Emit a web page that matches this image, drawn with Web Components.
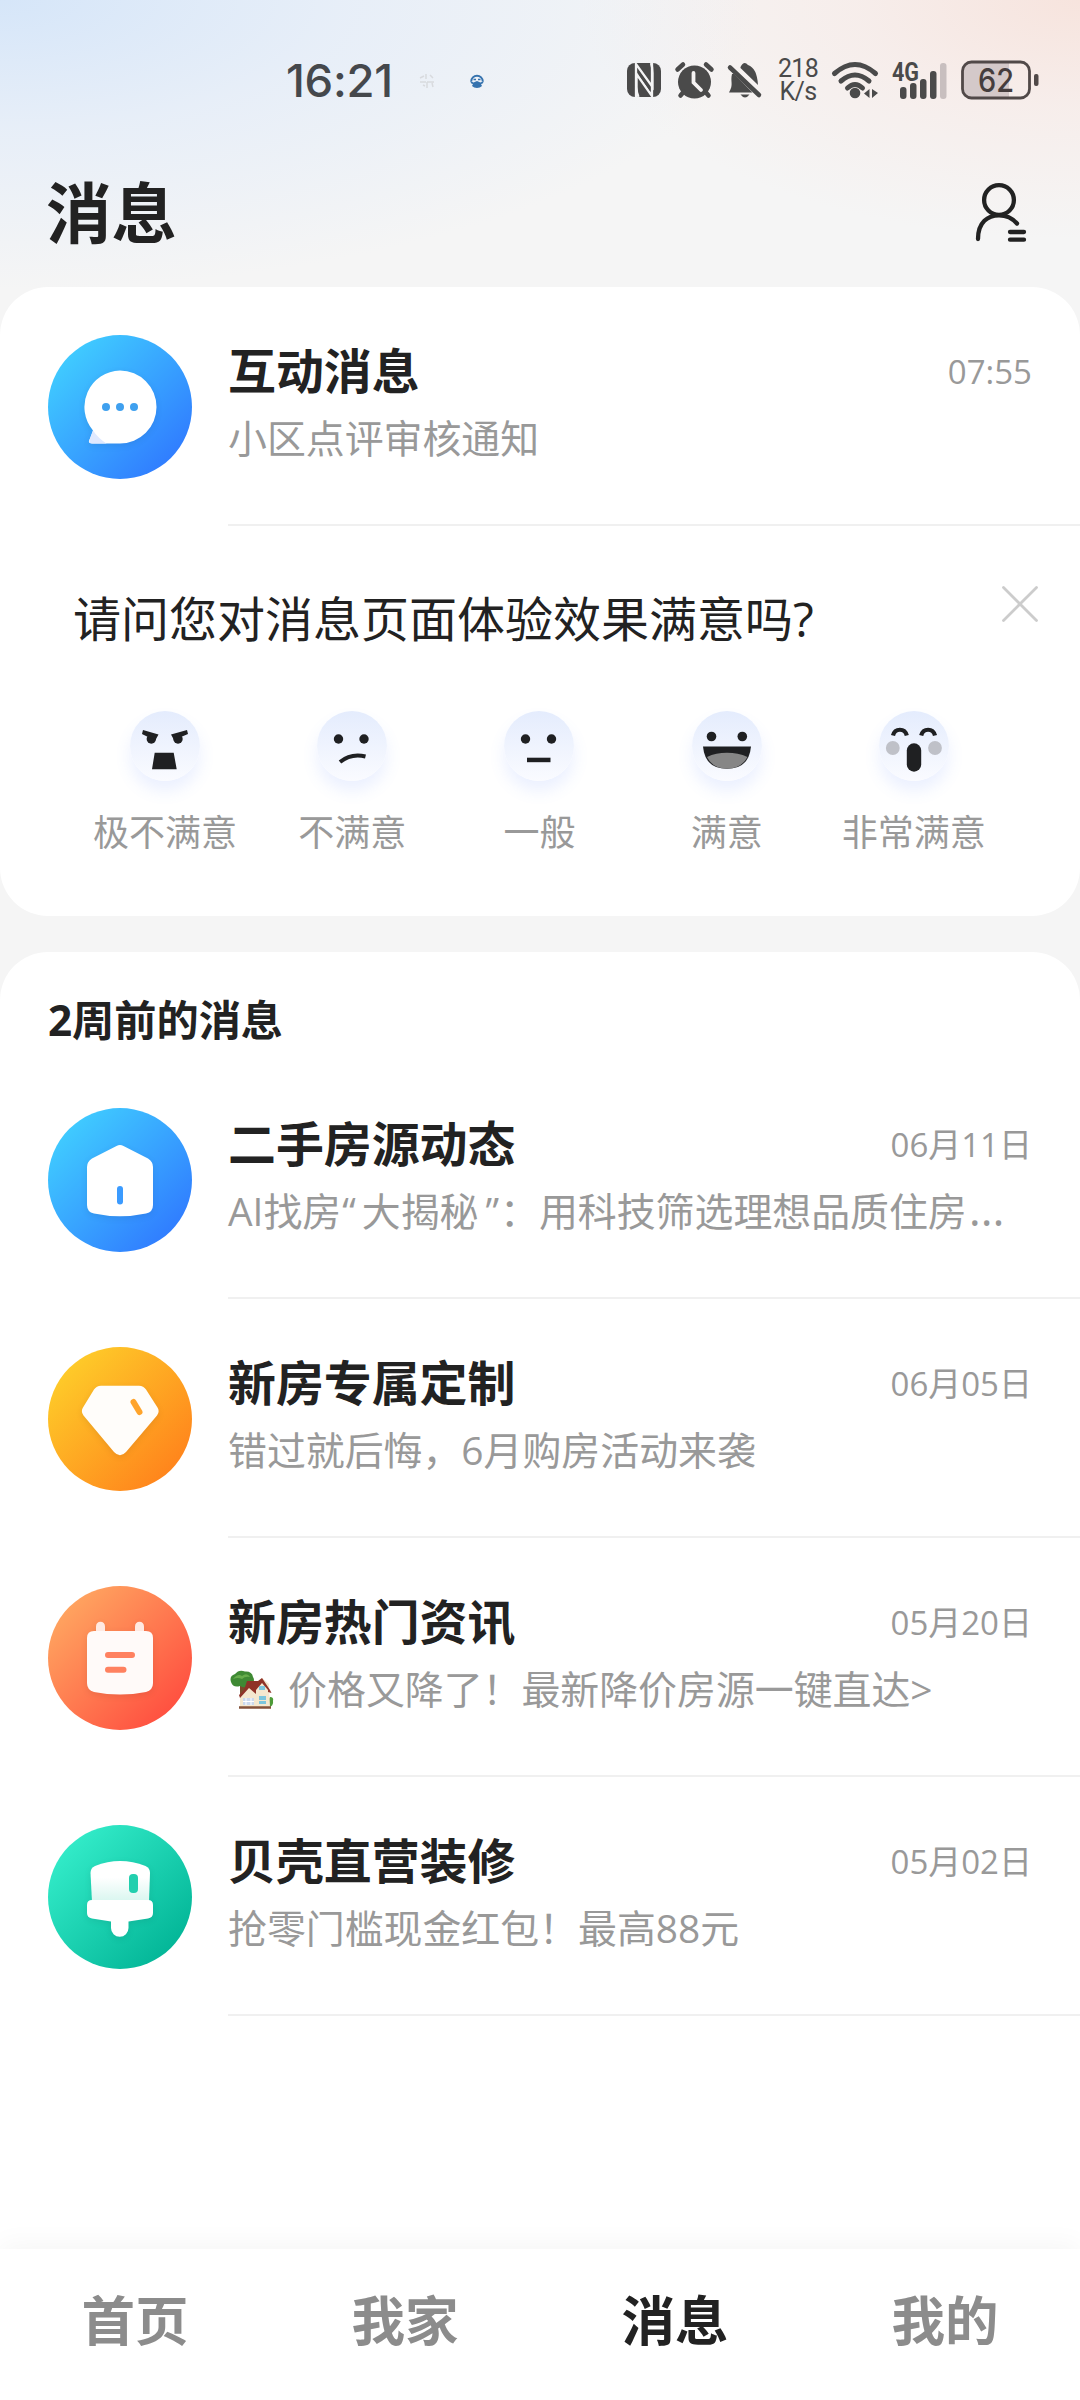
<!DOCTYPE html>
<html lang="zh-CN">
<head>
<meta charset="utf-8">
<title>消息</title>
<style>
html,body{margin:0;padding:0}
body{width:1080px;height:2400px;overflow:hidden;background:#f5f5f5;font-family:"Open Sans","Noto Sans CJK SC",sans-serif;color:#222}
</style>
</head>
<body>
<message-page></message-page>
<script>
function define(name, html) {
  const t = document.createElement('template');
  t.innerHTML = html;
  customElements.define(name, class extends HTMLElement {
    constructor() {
      super();
      this.attachShadow({ mode: 'open' }).appendChild(t.content.cloneNode(true));
    }
  });
}

/* ---------- status bar ---------- */
define('status-bar', `
<style>
:host{display:flex;height:160px;align-items:center;box-sizing:border-box;padding-left:286px;color:#4a4a4a}
svg{display:block;flex:none;overflow:visible}
.time{width:106px;font:500 45.500px/60px "Inter",sans-serif;letter-spacing:-.3px;white-space:nowrap;color:#45484c;padding-top:2px}
.n1{margin-left:26px}.n2{margin-left:34px}
.n1,.n2{padding-top:2px}
.nfc{margin-left:143px}.alarm{margin-left:14px}.bell{margin-left:14px}
.net{margin-left:16px;width:40px;font:400 25px/23px Roboto,sans-serif;text-align:center;display:flex;flex-direction:column;letter-spacing:-.7px}
.wifi{margin-left:14px}
.sig{margin-left:13px}
.sig text{font:700 25px "Roboto",sans-serif}
.bat{margin-left:13px;}
.bat text{font:500 33px "Inter",sans-serif}
</style>
<span class="time">16:21</span>
<svg class="n1" width="18" height="18" viewBox="0 0 18 18" fill="none" stroke="#d8dade" stroke-width="1.5"><path d="M2 6l4-2M8 2v5M2 10h6M12 3l3 3M9 10h7M9 10v6M14 11l1 4M5 13l2 1"/></svg>
<svg class="n2" width="14" height="14" viewBox="0 0 14 14"><path d="M1.200 7.500A5.800 5.800 0 0 1 12.800 7.500" fill="none" stroke="#3572ae" stroke-width="2"/><path d="M0.500 7l3 1.500L7 7l3.500 1.500l3-1.500q0 3-2.500 3l1 2q-2 2-5 2t-5-2l1-2q-2.500 0-2.500-3z" fill="#3572ae"/><path d="M3.500 5.500h2.500M8 5.500h2.500" stroke="#3572ae" stroke-width="1.600"/></svg>
<svg class="nfc" width="34" height="34" viewBox="0 0 34 34"><rect width="34" height="34" rx="8" fill="#4a4a4a"/><path d="M9 34V1L25.500 24V10Q25.500 4 24 0" fill="none" stroke="#f4f4f5" stroke-width="2.300"/><path d="M25 0V33L9.500 11V24Q9.500 30 11.500 34" fill="none" stroke="#f4f4f5" stroke-width="2.300"/><path d="M12 8L23 24V28L12 12z" fill="#4a4a4a"/></svg>
<svg class="alarm" width="39" height="36" viewBox="0 0 39 36"><circle cx="19.500" cy="20" r="16.500" fill="#4a4a4a"/><g stroke="#4a4a4a" stroke-width="4.500" stroke-linecap="round"><path d="M2.500 7.500L8 2.500M36.500 7.500L31 2.500M8.500 30L5.500 33.500M30.500 30L33.500 33.500"/></g><path d="M18.500 11V20.500L26 28" fill="none" stroke="#f5f3f3" stroke-width="3.800" stroke-linecap="round"/></svg>
<svg class="bell" width="34" height="36" viewBox="0 0 34 36"><path d="M4 12C2 20 6 22 1 30.500H24.500L6 12z" fill="#4a4a4a"/><path d="M12.500 5Q16 -2 20 3Q29 6 30 23L12.500 6z" fill="#4a4a4a"/><path d="M2 5.500L31 33" stroke="#4a4a4a" stroke-width="4.500" stroke-linecap="round"/><path d="M12.500 32.500h9q-4.500 6-9 0z" fill="#4a4a4a"/></svg>
<span class="net"><span>218</span><span>K/s</span></span>
<svg class="wifi" width="47" height="38" viewBox="0 0 47 38"><g fill="none" stroke="#4a4a4a" stroke-width="5" stroke-linecap="round"><path d="M2.500 12.500Q23 -5.500 43.500 12.500"/><path d="M9 20Q23 8 37 20"/><path d="M15.500 27Q23 20 30.500 27"/></g><circle cx="23" cy="32" r="5.300" fill="#4a4a4a"/><path d="M32 32.500l5.500-4.500v9zM40 28l6 4-6 5z" fill="#4a4a4a"/></svg>
<svg class="sig" width="56" height="40" viewBox="0 0 56 40"><text x="0" y="21" textLength="27" lengthAdjust="spacingAndGlyphs" fill="#4a4a4a">4G</text><g fill="#4a4a4a"><rect x="8" y="27" width="6.500" height="12" rx="3"/><rect x="18" y="23" width="6.500" height="16" rx="3"/><rect x="28" y="19" width="6.500" height="20" rx="3"/><rect x="38" y="11" width="6.500" height="28" rx="3"/></g><rect x="48" y="3" width="6.500" height="36" rx="3" fill="#c8bfbf"/></svg>
<svg class="bat" width="78" height="40" viewBox="0 0 78 40"><path d="M10 2.500H48V37.500H10Q2 37.500 2 30V10Q2 2.500 10 2.500z" fill="#d4c9c9"/><rect x="1.500" y="2" width="67" height="36" rx="9" fill="none" stroke="#514948" stroke-width="2.800"/><rect x="73" y="14" width="4.500" height="12" rx="2" fill="#514948"/><text x="35" y="32" text-anchor="middle" textLength="36" lengthAdjust="spacingAndGlyphs" fill="#453d3d">62</text></svg>
`);

/* ---------- title bar ---------- */
define('title-bar', `
<style>
:host{display:flex;height:127px;box-sizing:border-box;padding:20px 52px 0 46px;justify-content:space-between;align-items:flex-start}
h1{margin:0;font-size:65.500px;line-height:66px;font-weight:700}
svg{display:block}
</style>
<h1><slot></slot></h1>
<svg width="54" height="66" viewBox="974 180 54 66" fill="none" stroke="#222" stroke-width="4.300" stroke-linecap="round"><circle cx="999" cy="200" r="14.900"/><path d="M978 239C978 222 988 215.300 999 215.300Q1010 215.300 1017 223.500M1010 232H1024M1010 239.700H1024"/></svg>
`);

/* ---------- white rounded panel ---------- */
define('rounded-panel', `
<style>:host{display:flex;flex-direction:column;background:#fff;border-radius:48px;overflow:hidden}</style><slot></slot>
`);

/* ---------- one conversation row ---------- */
define('message-item', `
<style>
:host{display:flex;height:239px;box-sizing:border-box;padding-left:48px}
.main{flex:1;min-width:0;margin-left:36px;border-bottom:2px solid #f0f0f0;padding-right:48px;box-sizing:border-box;height:191px;display:flex;flex-direction:column}
.top{display:flex;justify-content:space-between;align-items:flex-start;height:73px}
.title{font-size:47.900px;line-height:72px;font-weight:700;color:#222;white-space:nowrap}
.time{font-size:33px;line-height:74px;color:#999;white-space:nowrap}
.sub{font-size:38.900px;line-height:60px;color:#999;white-space:nowrap}
</style>
<slot name="icon"></slot>
<div class="main"><div class="top"><span class="title"><slot name="title"></slot></span><span class="time"><slot name="time"></slot></span></div><div class="sub"><slot></slot></div></div>
`);

/* ---------- round avatars ---------- */
const avatar = (name, c1, c2, art) => define(name, `
<style>:host{display:block;width:144px;height:144px;border-radius:50%;flex:none;background:linear-gradient(135deg,${c1} 8%,${c2} 92%)}svg{display:block;filter:drop-shadow(0 2px 3px rgba(0,0,0,.08))}</style>
<svg width="144" height="144" viewBox="0 0 144 144" fill="#fff">${art}</svg>`);

avatar('avatar-chat', '#41d1ff', '#2f77ff', `
<path d="M72 35.500a36.500 36.500 0 1 1 0 73H44q-5 0-2-5l3-8A36.500 36.500 0 0 1 72 35.500z"/>
<path d="M45 95.500L41.500 105q-1 3.500 3 3.500h14Q50 103 45 95.500z" fill="#dfe9ff"/>
<g fill="#3fa0ef"><circle cx="58" cy="72" r="4"/><circle cx="72" cy="72" r="4"/><circle cx="86" cy="72" r="4"/></g>`);
avatar('avatar-home', '#41d1ff', '#2f77ff', `
<path d="M68.500 38Q72 36 75.500 38L100 50.500Q105 53.500 105 59V97Q105 104 98 105.500Q72 111 46 105.500Q39 104 39 97V59Q39 53.500 44 50.500z"/>
<path d="M72 81V93.500" stroke="#3b9bff" stroke-width="6" stroke-linecap="round"/>`);
avatar('avatar-diamond', '#fed02a', '#ff7f1b', `
<path d="M53 38.700H91Q95.500 38.700 98 42.500L109.500 60.500Q112 64.500 109 68.500L78 105Q72 111.500 66 105L35.500 68.500Q32.500 64.500 35 60.500L46 42.500Q48.500 38.700 53 38.700z" fill="#fffdfa"/>
<path d="M85.500 55L91.500 65" stroke="#ffa42b" stroke-width="6" stroke-linecap="round"/>`);
avatar('avatar-calendar', '#ffaa62', '#ff4a3e', `
<g fill="#ffe9e2"><rect x="48" y="35.700" width="9" height="16" rx="4.500"/><rect x="87" y="35.700" width="9" height="16" rx="4.500"/></g>
<path d="M46 45H98Q105 45 105 52V97Q105 104 98 106Q72 111 46 106Q39 104 39 97V52Q39 45 46 45z" fill="#fffaf9"/>
<path d="M60 69H84M60 83.700H75.500" stroke="#ff8160" stroke-width="6" stroke-linecap="round"/>`);
avatar('avatar-brush', '#36efcc', '#00b294', `
<defs><linearGradient id="g" x2="0" y2="1"><stop offset=".4" stop-color="#fff"/><stop offset="1" stop-color="#d8f6ef"/></linearGradient></defs>
<path d="M42.500 48Q42.500 43 47 41Q72 31 97.500 41Q102 43 102 48L101 77H44z" fill="url(#g)"/>
<rect x="81" y="49" width="9" height="19" rx="4" fill="#22cfae"/>
<path d="M44 75H100Q105 75 105 80V88Q105 92.500 100 93.500L80.500 96.500V103A8.750 8.750 0 0 1 63 103V96.500L44 93.500Q39 92.500 39 88V80Q39 75 44 75z"/>`);

/* ---------- garden house pictogram used inside a line of text ---------- */
define('house-pictogram', `
<style>:host{display:inline-block;width:44px;height:40px;margin:0 4px 0 2px;vertical-align:-6px}svg{display:block}</style>
<svg width="44" height="40" viewBox="0 0 44 40"><path d="M10 14h5v13h-5z" fill="#7a4b2b"/><path d="M1 12Q-1 6 5 4Q9-1 15 1.500Q22 1 23 7Q26 12 20 15Q15 19 10 16Q3 18 1 12z" fill="#3f8a34"/><path d="M3 9q5-6 9-3q5-4 8 1q-5-1-8 2q-4-2-9 0z" fill="#67ad4c"/><path d="M38 38Q44 36 43 31Q44 27 40 27L36 34z" fill="#4d9a37"/><path d="M25 14L32 8L39 14L40 37H10V26L18 18z" fill="#f4e8cf"/><path d="M17 11H28L32 8L40 20L41.500 23L38 22L32 14L26 22V24L19 18L10 28L9 25L14 20z" fill="#8f3328"/><path d="M26 20L32 13L38 20V24H26z" fill="#f4e8cf"/><g fill="#7cc6dd"><rect x="29" y="16" width="6" height="4"/><rect x="29" y="26" width="7" height="4"/><rect x="29" y="31" width="7" height="3"/></g><path d="M13 28h11v7h-11z" fill="#cbd9ed"/><path d="M16 28v7M21 28v7M13 31.500h11" stroke="#fff"/><path d="M9 37.500H41" stroke="#84523a" stroke-width="2.500"/></svg>
`);

/* ---------- survey ---------- */
define('rating-option', `
<style>
:host{display:flex;flex-direction:column;align-items:center;width:187.200px}
.face{width:70px;height:70px;border-radius:50%;background:linear-gradient(#e4ecfd,#fafbff);box-shadow:0 10px 16px rgba(90,130,255,.12)}
.label{margin-top:27px;font-size:36px;line-height:50px;color:#999;white-space:nowrap}
</style>
<div class="face"><slot name="face"></slot></div><div class="label"><slot></slot></div>
`);
const face = (name, art) => define(name, `<style>:host,svg{display:block}</style><svg width="70" height="70" viewBox="0 0 70 70" fill="#1f2022" stroke="none">${art}</svg>`);
face('face-angry', '<circle cx="21.300" cy="28" r="4.700"/><circle cx="48" cy="28" r="4.700"/><path d="M13 19L28.500 23.500L25.500 29L18 26L12 23zM57 19L41 23.500L44 29L51 26L58 23zM24.700 41.700H43.700L46.700 58.300H22z"/>');
face('face-unhappy', '<circle cx="21.500" cy="28" r="4.700"/><circle cx="47" cy="28" r="4.700"/><path d="M23 51Q34 42 48.500 45.500" fill="none" stroke="#1f2022" stroke-width="4"/>');
face('face-neutral', '<circle cx="21.500" cy="28" r="4.700"/><circle cx="47.500" cy="28" r="4.700"/><path d="M23 46.700h23.500v4.500H23z"/>');
face('face-smile', '<circle cx="19.500" cy="25.500" r="4.800"/><circle cx="50.300" cy="25.500" r="4.800"/><path d="M11 35.500H59Q57 57.800 35 57.800T11 35.500z"/><path d="M15 46Q24 41.800 35 41.800T55.500 46Q49 57.800 35 57.800T15 46z" fill="#868686"/>');
face('face-delighted', '<g fill="#bfc1c8"><circle cx="13.800" cy="37" r="6.900"/><circle cx="56" cy="37" r="6.900"/></g><rect x="27.800" y="32.300" width="14.400" height="28.400" rx="7.200"/><path d="M14 24.500C16 16.800 25.800 16.800 27.800 24.500M42.200 24.500C44.200 16.800 54 16.800 56 24.500" fill="none" stroke="#1f2022" stroke-width="4.200"/>');

define('satisfaction-survey', `
<style>
:host{display:flex;flex-direction:column}
.head{display:flex;justify-content:space-between;padding:57px 41px 0 73px;height:128px}
.q{font-size:48px;line-height:72px;color:#222;white-space:nowrap}
svg{display:block;margin-top:2px}
.row{display:flex;padding-left:71.500px}
</style>
<div class="head"><span class="q"><slot name="question"></slot></span><svg width="38" height="38" viewBox="0 0 38 38"><path d="M2.500 2.500L35.500 35.500M35.500 2.500L2.500 35.500" stroke="#ccc" stroke-width="2.800" stroke-linecap="round"/></svg></div>
<div class="row"><slot></slot></div>
`);

/* ---------- tabs ---------- */
define('tab-item', `
<style>:host{flex:1;display:block;text-align:center;font-size:53.500px;line-height:76px;font-weight:700;color:#8c8c8c}:host([active]){color:#222}</style><slot></slot>
`);
define('tab-bar', `
<style>:host{display:flex;height:151px;box-sizing:border-box;padding-top:34px;background:#fff;box-shadow:0 -4px 26px rgba(0,0,0,.045);position:relative}</style><slot></slot>
`);

define('message-page', `
<style>
:host{display:flex;flex-direction:column;height:2400px;background:
radial-gradient(ellipse 760px 290px at 0 0,rgba(212,229,249,.95),rgba(222,234,250,.6) 45%,rgba(245,245,245,0)) no-repeat,
radial-gradient(ellipse 500px 240px at 1080px 0,rgba(247,226,219,.9),rgba(248,230,225,.5) 45%,rgba(245,245,245,0)) no-repeat,#f5f5f5}
.first{height:629px;flex:none}
.second{margin-top:36px;flex:1;border-radius:48px 48px 0 0;}
h2{margin:0;padding:38px 48px 0;font-size:42.200px;line-height:60px;font-weight:700}
.first message-item{height:191px;margin-top:48px}
.second h2{height:118px;box-sizing:border-box;margin-bottom:38px}
.ql{margin:0 6px 0 1px}.qr{margin:0 1px 0 7px}
.more{font-size:46px;margin-left:2px;line-height:1px}
</style>
<status-bar></status-bar>
<title-bar>消息</title-bar>
<rounded-panel class="first">
<message-item><avatar-chat slot="icon"></avatar-chat><span slot="title">互动消息</span><span slot="time">07:55</span>小区点评审核通知</message-item>
<satisfaction-survey><span slot="question">请问您对消息页面体验效果满意吗?</span>
<rating-option><face-angry slot="face"></face-angry>极不满意</rating-option><rating-option><face-unhappy slot="face"></face-unhappy>不满意</rating-option><rating-option><face-neutral slot="face"></face-neutral>一般</rating-option><rating-option><face-smile slot="face"></face-smile>满意</rating-option><rating-option><face-delighted slot="face"></face-delighted>非常满意</rating-option>
</satisfaction-survey>
</rounded-panel>
<rounded-panel class="second">
<h2>2周前的消息</h2>
<message-item><avatar-home slot="icon"></avatar-home><span slot="title">二手房源动态</span><span slot="time">06月11日</span>AI找房<span class="ql">“</span>大揭秘<span class="qr">”</span>：用科技筛选理想品质住房<span class="more">…</span></message-item>
<message-item><avatar-diamond slot="icon"></avatar-diamond><span slot="title">新房专属定制</span><span slot="time">06月05日</span>错过就后悔，6月购房活动来袭</message-item>
<message-item><avatar-calendar slot="icon"></avatar-calendar><span slot="title">新房热门资讯</span><span slot="time">05月20日</span><house-pictogram></house-pictogram> 价格又降了！最新降价房源一键直达&gt;</message-item>
<message-item><avatar-brush slot="icon"></avatar-brush><span slot="title">贝壳直营装修</span><span slot="time">05月02日</span>抢零门槛现金红包！最高88元</message-item>
</rounded-panel>
<tab-bar><tab-item>首页</tab-item><tab-item>我家</tab-item><tab-item active>消息</tab-item><tab-item>我的</tab-item></tab-bar>
`);
</script>
</body>
</html>
